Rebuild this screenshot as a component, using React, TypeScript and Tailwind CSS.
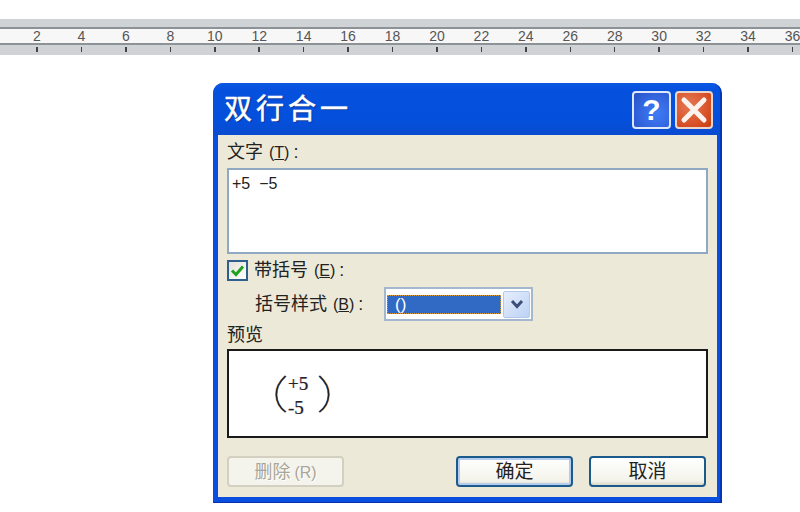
import React from 'react';

const CJK = "font-['Liberation_Sans','Noto_Sans_CJK_SC',sans-serif]";
const rulerMarks = [2, 4, 6, 8, 10, 12, 14, 16, 18, 20, 22, 24, 26, 28, 30, 32, 34, 36];

const Ruler: React.FC = () => (
  <div className="mt-[19px] h-[36px] w-[800px] overflow-hidden bg-[#d0d3d6] flex flex-col">
    <div className="h-[8px] shrink-0" />
    <div className="h-[18px] shrink-0 border-y-2 border-[#8c9296] bg-[#f7f7f7] flex pl-[14.8px]">
      {rulerMarks.map((n) => (
        <span key={n} className="w-[44.44px] shrink-0 text-center text-[14px] leading-[15px] text-[#555] font-['Liberation_Sans',sans-serif]">
          {n}
        </span>
      ))}
    </div>
    <div className="flex pl-[14.8px] pt-[2px]">
      {rulerMarks.map((n) => (
        <span key={n} className="w-[44.44px] shrink-0 flex justify-center">
          <span className="block h-[5px] w-[1.5px] bg-[#444]" />
        </span>
      ))}
    </div>
  </div>
);

const CaptionButtons: React.FC = () => (
  <div className="flex gap-[4px]">
    <div className="flex h-[38px] w-[39px] items-center justify-center rounded-[4px] border-2 border-[#dfe8fa] bg-[radial-gradient(circle_at_65%_60%,#3f7cf5,#2f5fd8_70%,#2a50c0)]">
      <span className="text-[30px] font-bold leading-none text-white font-['Liberation_Sans',sans-serif]">?</span>
    </div>
    <div className="flex h-[38px] w-[38px] items-center justify-center rounded-[4px] border-2 border-[#ecd6cc] bg-[radial-gradient(circle_at_35%_35%,#e47a55,#d9532a_60%,#c63d0e)]">
      <svg width="28" height="28" viewBox="0 0 28 28">
        <path d="M4 4 L24 24 M24 4 L4 24" stroke="#fdf3ee" strokeWidth="5" strokeLinecap="round" />
      </svg>
    </div>
  </div>
);

const BRACKET_PATH = 'M10.5 1 C3 8 1 14 1.3 20 C1.6 27 5 33 10.5 37';

const Bracket: React.FC<{ flip?: boolean }> = ({ flip }) => (
  <svg width="12" height="38" viewBox="0 0 12 38" className={flip ? '-scale-x-100' : ''}>
    <path d={BRACKET_PATH} transform="translate(-0.6 0)" fill="none" stroke="#d89040" strokeWidth="1.2" />
    <path d={BRACKET_PATH} transform="translate(0.6 0)" fill="none" stroke="#3d78c8" strokeWidth="1.2" />
    <path d={BRACKET_PATH} fill="none" stroke="#1f1f28" strokeWidth="1.3" />
  </svg>
);

const DialogButton: React.FC<{ label: string; primary?: boolean; className?: string }> = ({ label, primary, className }) => (
  <button
    className={`h-[31px] w-[117px] rounded-[4px] border-2 border-[#1d5a8c] text-[19px] leading-none text-[#222] bg-[linear-gradient(to_bottom,#ffffff,#f3f2ea_85%,#dcd8c8)] ${
      primary ? 'shadow-[inset_0_0_0_2px_#b4ccf0]' : ''
    } ${className ?? ''}`}
  >
    {label}
  </button>
);

const Hotkey: React.FC<{ letter: string }> = ({ letter }) => (
  <span className="ml-[6px] mr-[4px] text-[16px]">
    (<u>{letter}</u>)
  </span>
);

export default function App() {
  return (
    <div className={`h-[512px] w-[800px] overflow-hidden bg-white ${CJK}`}>
      <Ruler />

      {/* dialog */}
      <div className="ml-[213px] mt-[28px] h-[420px] w-[509px] rounded-t-[10px] bg-[#0a4ee0] pl-[5px] pr-[3px] pb-[5px] flex flex-col border-b border-[#0831a9] border-r-2 border-r-[#0636b8]">
        <div className="-ml-[5px] -mr-[3px] h-[52px] shrink-0 rounded-t-[10px] bg-[linear-gradient(to_bottom,#0a58e4,#0650de_15%,#0450dc_70%,#0a4bd0)] pl-[11px] pr-[7px] pt-[8px] flex justify-between">
          <span className="text-[28px] leading-[38px] tracking-[4px] text-white [-webkit-text-stroke:0.5px_white] [text-shadow:1px_1px_1px_#0a2a80]">双行合一</span>
          <CaptionButtons />
        </div>

        <div className="flex-1 bg-[#ece9d8] pl-[9px] pr-[9px] text-[18px] text-[#222]">
          <div className="h-[33px] pt-[7px] leading-[20px]">
            文字
            <Hotkey letter="T" />:
          </div>
          <div className="h-[86px] w-[481px] border-2 border-[#8fa9c2] bg-white pl-[3px] pt-[4px] text-[16px] leading-[20px] whitespace-pre font-['Liberation_Sans',sans-serif]">
            +5  −5
          </div>

          <div className="mt-[6px] flex items-center gap-[6px]">
            <div className="flex h-[21px] w-[21px] items-center justify-center border-2 border-[#2f5f8c] bg-[linear-gradient(135deg,#e4e2d8,#ffffff)]">
              <svg width="15" height="13" viewBox="0 0 15 13">
                <path d="M2 6.5 L6 10.5 L13 2.5" fill="none" stroke="#21a121" strokeWidth="3" />
              </svg>
            </div>
            <span className="leading-[20px]">
              带括号
              <Hotkey letter="E" />:
            </span>
          </div>

          <div className="mt-[6px] ml-[28px] flex items-center">
            <span className="w-[129px] leading-[20px]">
              括号样式
              <Hotkey letter="B" />:
            </span>
            <div className="flex h-[34px] w-[149px] items-center border-2 border-[#a3b8cf] bg-white pl-[1px] pr-[1px]">
              <div className="flex h-[19px] w-[114px] items-center border border-dotted border-[#d89a3a] bg-[#316ac5] pl-[7px] text-[17px] leading-none text-white font-['Liberation_Sans',sans-serif]">
                ()
              </div>
              <div className="ml-auto flex h-[27px] w-[27px] items-center justify-center rounded-[2px] border border-[#b4c8e8] bg-[linear-gradient(135deg,#e6eefc,#bcd2f6)]">
                <svg width="14" height="10" viewBox="0 0 14 10">
                  <path d="M2 2 L7 7.5 L12 2" fill="none" stroke="#3c4f78" strokeWidth="3" />
                </svg>
              </div>
            </div>
          </div>

          <div className="h-[28px] pt-[3px] leading-[22px]">预览</div>
          <div className="flex h-[89px] w-[481px] items-start border-2 border-[#1a1a1a] bg-white pl-[46px] pt-[24px]">
            <Bracket />
            <div className="ml-[1px] w-[30px] -mt-[3px] text-[19px] leading-[24px] text-[#22222e] [text-shadow:-0.5px_0_#d8904080,0.5px_0_#3d78c880] font-['Liberation_Serif',serif]">
              <div>+5</div>
              <div>-5</div>
            </div>
            <Bracket flip />
          </div>

          <div className="mt-[18px] flex">
            <button className="h-[31px] w-[117px] rounded-[4px] border-2 border-[#d3d0c2] bg-[#f4f3ec] text-[18px] leading-none text-[#a8a698] [text-shadow:1px_1px_0_#ffffff]">
              删除<span className="ml-[4px] text-[16px]">(R)</span>
            </button>
            <DialogButton label="确定" primary className="ml-[112px]" />
            <DialogButton label="取消" className="ml-[16px]" />
          </div>
        </div>
      </div>
    </div>
  );
}
